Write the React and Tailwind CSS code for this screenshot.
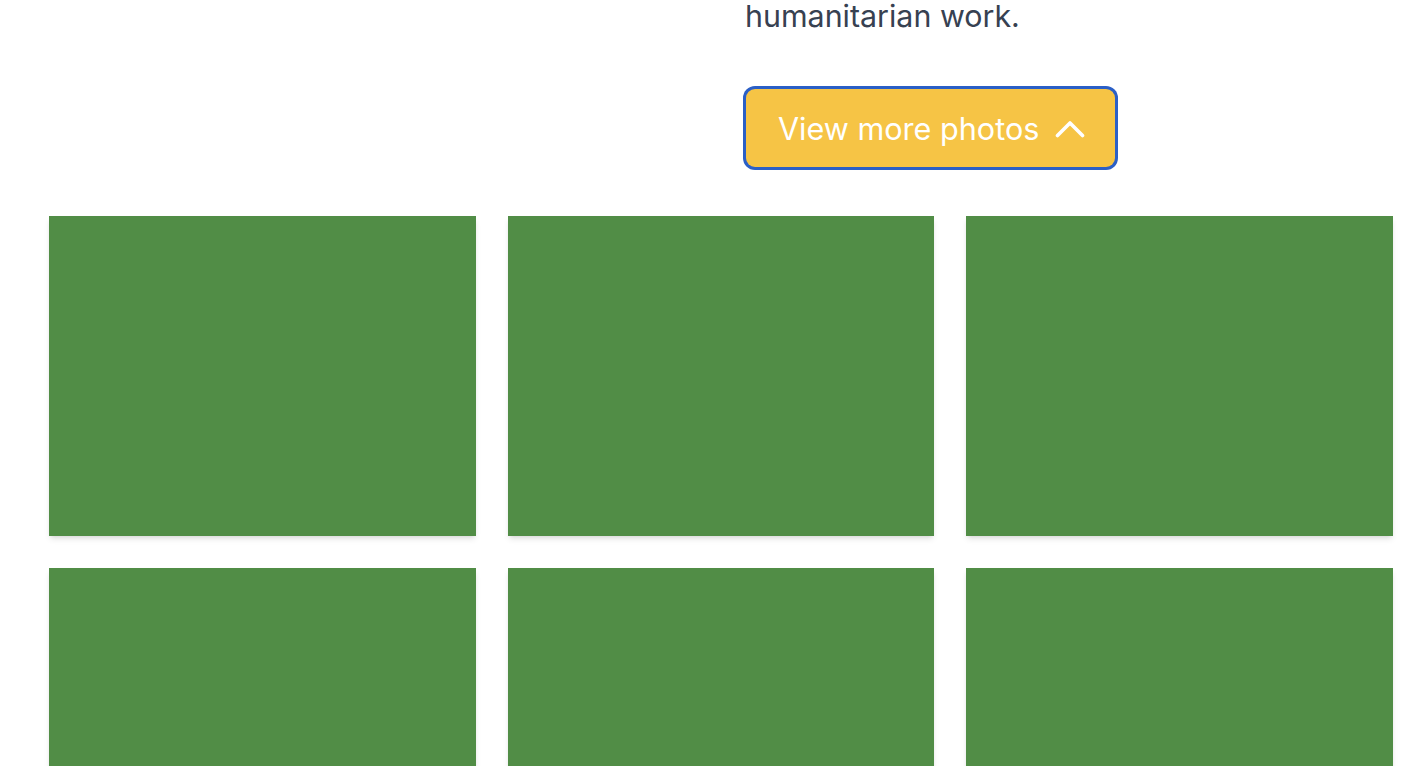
const photos = [1, 2, 3, 4, 5, 6]

function ChevronUp() {
  return (
    <svg width="30" height="18" viewBox="0 0 30 18" fill="none" aria-hidden="true">
      <path d="M2.5 15.5 15 3l12.5 12.5" stroke="white" strokeWidth="3.6" strokeLinecap="round" strokeLinejoin="round" />
    </svg>
  )
}

export default function App() {
  return (
    <div className="min-h-screen bg-white font-['Inter',sans-serif]">
      <div className="ml-[49px] w-[1344px] pb-16">
        <div className="grid grid-cols-2 gap-12">
          <div />
          <div>
            <p className="text-[30.4px] leading-[32px] text-[#374151]">humanitarian work.</p>
            <button
              type="button"
              className="mt-[57px] ml-px inline-flex h-[78px] items-center gap-4 rounded-[9px] bg-[#f6c445] pl-8 pr-[30px] pt-0.5 text-[30.6px] leading-9 text-white ring-[3px] ring-[#2b5fc6]"
            >
              View more photos
              <ChevronUp />
            </button>
          </div>
        </div>
        <div className="mt-[49px] grid grid-cols-3 gap-8">
          {photos.map((p) => (
            <div key={p} className="h-[320px] bg-[#518d46] shadow-md" />
          ))}
        </div>
      </div>
    </div>
  )
}
